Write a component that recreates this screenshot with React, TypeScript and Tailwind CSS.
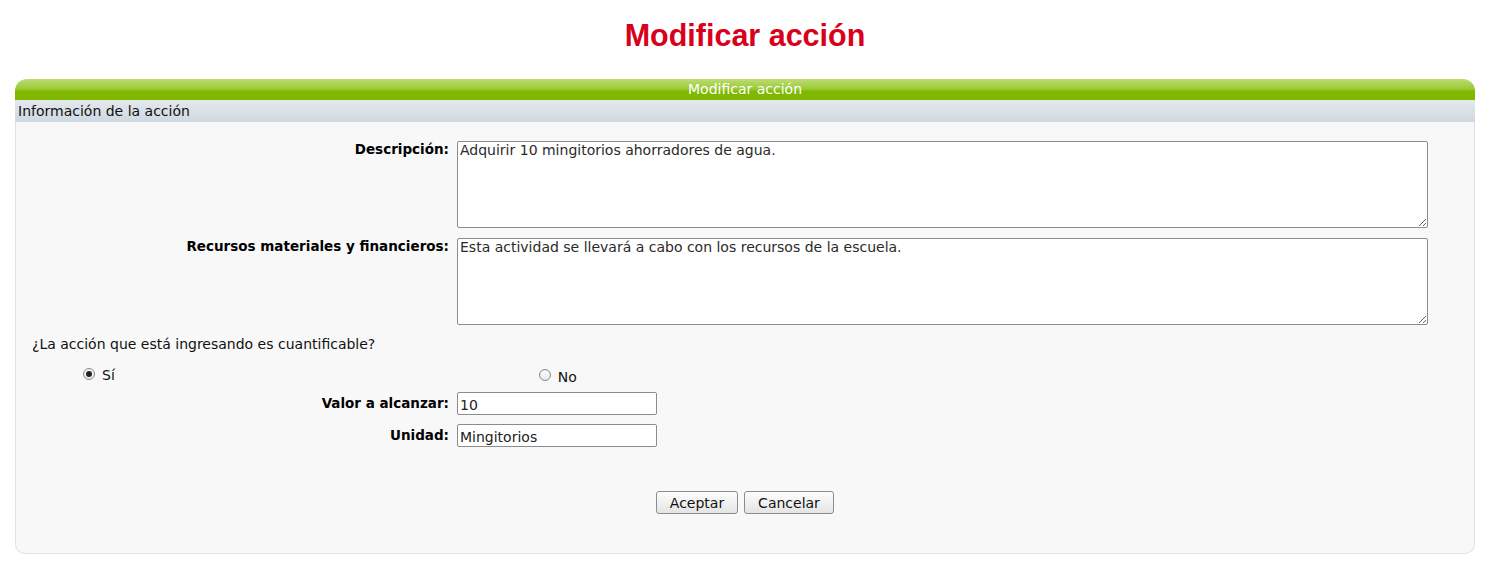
const dv = "font-['DejaVu_Sans',sans-serif]";

function Radio({ checked }: { checked?: boolean }) {
  return (
    <span className="inline-flex h-[12px] w-[12px] items-center justify-center rounded-full border border-[#8a8a8a] bg-[linear-gradient(#ffffff,#e8e8e8)] shadow-[inset_0_1px_1px_rgba(0,0,0,0.08)]">
      {checked && <span className="h-[6px] w-[6px] rounded-full bg-[#222]" />}
    </span>
  );
}

function Field({ label, value }: { label: string; value: string }) {
  return (
    <div className="flex items-center">
      <div className={`w-[434px] pr-[1px] text-right text-[13.5px] font-bold text-black ${dv}`}>{label}</div>
      <input
        defaultValue={value}
        className={`ml-[7px] h-[23px] w-[200px] rounded-[2px] border border-[#8c8c8c] bg-white px-[2px] pt-[2px] text-[14px] leading-none text-[#222] outline-none ${dv}`}
      />
    </div>
  );
}

function AreaRow({ label, value }: { label: string; value: string }) {
  return (
    <div className="flex items-start">
      <div className={`w-[434px] pr-[1px] text-right text-[13.5px] font-bold leading-[17px] text-black ${dv}`}>{label}</div>
      <textarea
        defaultValue={value}
        className={`ml-[7px] h-[87px] w-[971px] resize rounded-[2px] border border-[#8c8c8c] bg-white px-[2px] py-0 text-[14px] leading-[17px] text-[#2a2a2a] outline-none ${dv}`}
      />
    </div>
  );
}

function Btn({ children, w }: { children: string; w: string }) {
  return (
    <button
      className={`${w} h-[23px] rounded-[3px] border border-[#8c8c8c] bg-[linear-gradient(#fdfdfd,#e4e4e4)] text-[14px] leading-none text-[#111] ${dv}`}
    >
      {children}
    </button>
  );
}

export default function App() {
  return (
    <div className="min-h-[568px] bg-white pt-[19px]">
      <div className="ml-[15px] w-[1460px]">
        <h1 className="h-[32px] text-center font-['Liberation_Sans',Arial,sans-serif] text-[30.5px] font-bold leading-[32px] text-[#d9001b]">
          Modificar acción
        </h1>

        <div className={`mt-[28px] h-[21px] rounded-t-[12px] bg-[linear-gradient(#bcdc74_0%,#9dcb3a_45%,#80b800_60%,#80b800_100%)] text-center text-[14px] leading-[21px] text-white ${dv}`}>
          Modificar acción
        </div>
        <div className={`h-[22px] bg-[linear-gradient(#e4e8ed,#cfd8e0)] pl-[3px] text-[14px] leading-[22px] text-[#111] ${dv}`}>
          Información de la acción
        </div>

        <div className="h-[432px] rounded-b-[10px] border-x border-b border-[#e2e2e2] bg-[#f8f8f8] pt-[19px]">
          <AreaRow label="Descripción:" value="Adquirir 10 mingitorios ahorradores de agua." />
          <div className="mt-[10px]">
            <AreaRow label="Recursos materiales y financieros:" value="Esta actividad se llevará a cabo con los recursos de la escuela." />
          </div>

          <p className={`mt-[11px] pl-[16px] text-[14px] leading-[17px] text-[#111] ${dv}`}>
            ¿La acción que está ingresando es cuantificable?
          </p>

          <div className={`mt-[11px] flex h-[20px] items-start text-[14px] text-[#111] ${dv}`}>
            <div className="ml-[67px] flex items-center gap-[7px]">
              <Radio checked />
              <span className="mt-[3px] leading-[17px]">Sí</span>
            </div>
            <div className="ml-[424px] flex items-center gap-[7px]">
              <Radio />
              <span className="mt-[5px] leading-[17px]">No</span>
            </div>
          </div>

          <div className="mt-[8px] flex flex-col gap-[9px]">
            <Field label="Valor a alcanzar:" value="10" />
            <Field label="Unidad:" value="Mingitorios" />
          </div>

          <div className="mt-[44px] flex justify-center gap-[6px]">
            <Btn w="w-[82px]">Aceptar</Btn>
            <Btn w="w-[90px]">Cancelar</Btn>
          </div>
        </div>
      </div>
    </div>
  );
}
